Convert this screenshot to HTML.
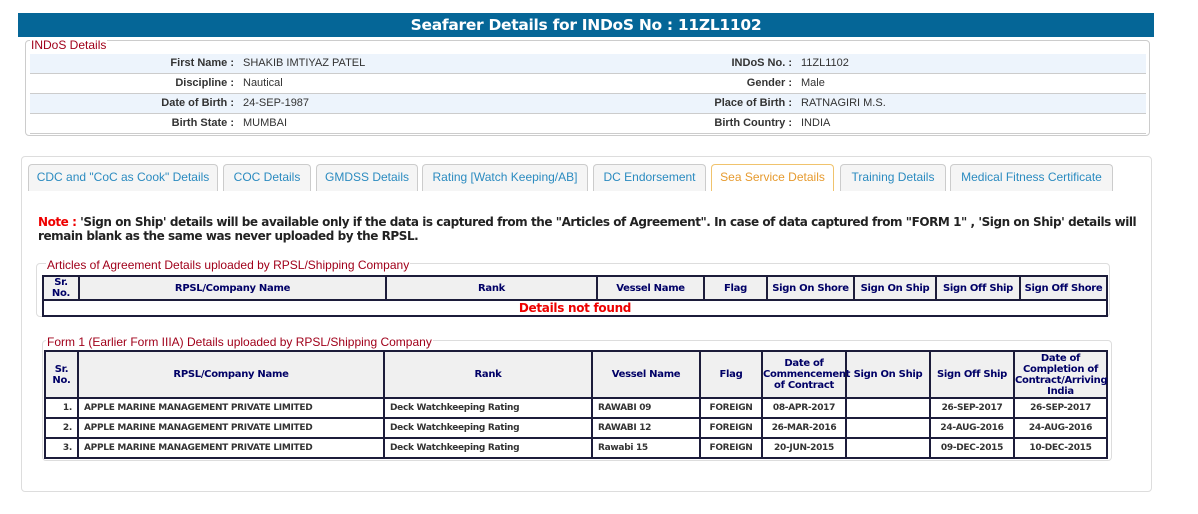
<!DOCTYPE html>
<html><head><meta charset="utf-8"><style>
*{box-sizing:border-box;margin:0;padding:0}
body{width:1198px;height:514px;background:#fff;position:relative;font-family:"Liberation Sans",Arial,sans-serif;overflow:hidden}
.abs{position:absolute}
.hdr{left:18px;top:13px;width:1136px;height:24px;background:#056697;color:#fff;font:bold 15.5px "DejaVu Sans",Verdana,sans-serif;letter-spacing:-0.3px;text-align:center;line-height:24px}
.box1{left:25px;top:40px;width:1125px;height:96px;border:1px solid #ccc;border-radius:4px}
.lg{background:#fff;color:#a0001a;font-size:12px;line-height:12px;padding:0 1px}
.row{position:absolute;left:4px;width:1116px;height:20px;border-bottom:1px solid #ccc;font-size:11px;line-height:19px;color:#333}
.row.b{background:#edf4fc}
.row .l1{position:absolute;right:912px;font-weight:bold}
.row .v1{position:absolute;left:213px}
.row .l2{position:absolute;right:354px;font-weight:bold}
.row .v2{position:absolute;left:771px}
.box2{left:21px;top:156px;width:1131px;height:336px;border:1px solid #ddd;border-radius:4px}
.tab{position:absolute;top:164px;height:27px;border:1px solid #ccc;border-bottom:none;border-radius:4px 4px 0 0;background:#f5f5f5;color:#2b8bc0;font-size:12px;text-align:center;line-height:25px}
.tab.act{background:#fff;border-color:#f0c36d;color:#e69a2e}
.note{left:38px;top:215px;width:1100px;white-space:nowrap;font:bold 12px "DejaVu Sans",Verdana,sans-serif;color:#222;line-height:14px;letter-spacing:-0.45px}
.fs{border:1px solid #ddd;border-radius:4px}
table{position:absolute;border-collapse:collapse;table-layout:fixed;font-family:"DejaVu Sans",Verdana,sans-serif}
td,th{border:2px solid #1c1c3a;font-size:10px;letter-spacing:-0.3px}
th{background:#f0f0f0;color:#000066;font-weight:bold;line-height:11px;padding:0}
td{color:#333;font-weight:bold;font-size:9px;height:20px;padding:0 5px}
.c{text-align:center}.r{text-align:right}
</style></head><body>
<div class="abs hdr">Seafarer Details for INDoS No : 11ZL1102</div>
<div class="abs box1">
 <span class="abs lg" style="left:4px;top:-2px">INDoS Details</span>
 <div class="row b" style="top:13px"><span class="l1">First Name :</span><span class="v1">SHAKIB IMTIYAZ PATEL</span><span class="l2">INDoS No. :</span><span class="v2">11ZL1102</span></div>
 <div class="row" style="top:33px"><span class="l1">Discipline :</span><span class="v1">Nautical</span><span class="l2">Gender :</span><span class="v2">Male</span></div>
 <div class="row b" style="top:53px"><span class="l1">Date of Birth :</span><span class="v1">24-SEP-1987</span><span class="l2">Place of Birth :</span><span class="v2">RATNAGIRI M.S.</span></div>
 <div class="row" style="top:73px"><span class="l1">Birth State :</span><span class="v1">MUMBAI</span><span class="l2">Birth Country :</span><span class="v2">INDIA</span></div>
</div>
<div class="abs box2"></div>
<div class="tab" style="left:28px;width:190px">CDC and "CoC as Cook" Details</div>
<div class="tab" style="left:223px;width:88px">COC Details</div>
<div class="tab" style="left:316px;width:102px">GMDSS Details</div>
<div class="tab" style="left:422px;width:166px">Rating [Watch Keeping/AB]</div>
<div class="tab" style="left:593px;width:113px">DC Endorsement</div>
<div class="tab act" style="left:711px;width:123px">Sea Service Details</div>
<div class="tab" style="left:840px;width:106px">Training Details</div>
<div class="tab" style="left:950px;width:163px">Medical Fitness Certificate</div>
<div class="abs note"><span style="color:#e00">Note :</span> 'Sign on Ship' details will be available only if the data is captured from the "Articles of Agreement". In case of data captured from "FORM 1" , 'Sign on Ship' details will<br>remain blank as the same was never uploaded by the RPSL.</div>

<div class="abs fs" style="left:36px;top:263px;width:1074px;height:54px"></div>
<span class="abs lg" style="left:46px;top:259px">Articles of Agreement Details uploaded by RPSL/Shipping Company</span>
<table style="left:42px;top:275px;width:1064px">
<colgroup><col style="width:36px"><col style="width:307px"><col style="width:211px"><col style="width:107px"><col style="width:63px"><col style="width:87px"><col style="width:82px"><col style="width:84px"><col style="width:87px"></colgroup>
<tr style="height:23px"><th>Sr.<br>No.</th><th>RPSL/Company Name</th><th>Rank</th><th>Vessel Name</th><th>Flag</th><th>Sign On Shore</th><th>Sign On Ship</th><th>Sign Off Ship</th><th>Sign Off Shore</th></tr>
<tr><td colspan="9" class="c" style="height:16px;color:#e00;font-size:12px;line-height:13px">Details not found</td></tr>
</table>

<div class="abs fs" style="left:42px;top:340px;width:1070px;height:121px"></div>
<span class="abs lg" style="left:46px;top:336px">Form 1 (Earlier Form IIIA) Details uploaded by RPSL/Shipping Company</span>
<table style="left:44px;top:350px;width:1062px">
<colgroup><col style="width:33px"><col style="width:306px"><col style="width:208px"><col style="width:108px"><col style="width:62px"><col style="width:84px"><col style="width:84px"><col style="width:84px"><col style="width:93px"></colgroup>
<tr style="height:47px"><th>Sr.<br>No.</th><th>RPSL/Company Name</th><th>Rank</th><th>Vessel Name</th><th>Flag</th><th>Date of Commencement of Contract</th><th>Sign On Ship</th><th>Sign Off Ship</th><th>Date of Completion of Contract/Arriving India</th></tr>
<tr><td class="r">1.</td><td>APPLE MARINE MANAGEMENT PRIVATE LIMITED</td><td>Deck Watchkeeping Rating</td><td>RAWABI 09</td><td class="c">FOREIGN</td><td class="c">08-APR-2017</td><td></td><td class="c">26-SEP-2017</td><td class="c">26-SEP-2017</td></tr>
<tr><td class="r">2.</td><td>APPLE MARINE MANAGEMENT PRIVATE LIMITED</td><td>Deck Watchkeeping Rating</td><td>RAWABI 12</td><td class="c">FOREIGN</td><td class="c">26-MAR-2016</td><td></td><td class="c">24-AUG-2016</td><td class="c">24-AUG-2016</td></tr>
<tr><td class="r">3.</td><td>APPLE MARINE MANAGEMENT PRIVATE LIMITED</td><td>Deck Watchkeeping Rating</td><td>Rawabi 15</td><td class="c">FOREIGN</td><td class="c">20-JUN-2015</td><td></td><td class="c">09-DEC-2015</td><td class="c">10-DEC-2015</td></tr>
</table>
</body></html>
